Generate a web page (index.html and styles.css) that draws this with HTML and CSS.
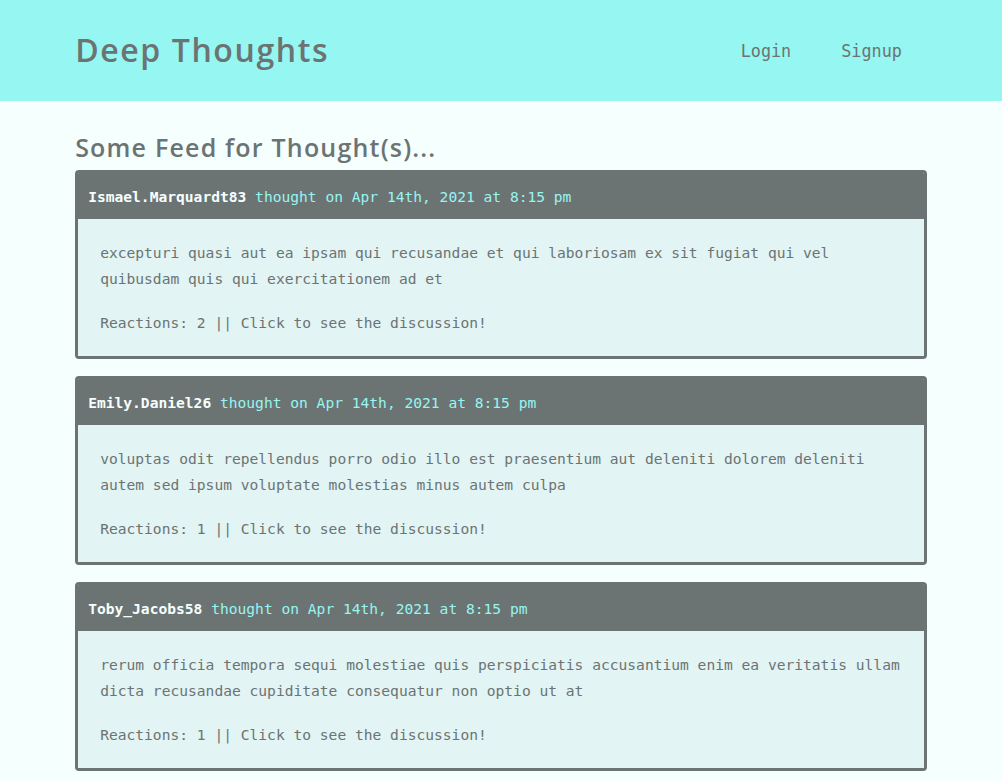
FILE: index.html
```html
<!DOCTYPE html>
<html lang="en">
<head>
<meta charset="utf-8">
<title>Deep Thoughts</title>
<link rel="stylesheet" href="styles.css">
</head>
<body>
<header class="site-header">
  <div class="container header-row">
    <a class="brand" href="#">Deep Thoughts</a>
    <nav class="nav">
      <a href="#">Login</a>
      <a href="#">Signup</a>
    </nav>
  </div>
</header>
<main class="container main">
  <h3 class="feed-title">Some Feed for Thought(s)...</h3>
  <div class="card">
    <div class="card-header"><a class="user" href="#">Ismael.Marquardt83</a>&nbsp;thought on Apr 14th, 2021 at 8:15 pm</div>
    <div class="card-body">
      <p>excepturi quasi aut ea ipsam qui recusandae et qui laboriosam ex sit fugiat qui vel quibusdam quis qui exercitationem ad et</p>
      <p>Reactions: 2 || Click to see the discussion!</p>
    </div>
  </div>
  <div class="card">
    <div class="card-header"><a class="user" href="#">Emily.Daniel26</a>&nbsp;thought on Apr 14th, 2021 at 8:15 pm</div>
    <div class="card-body">
      <p>voluptas odit repellendus porro odio illo est praesentium aut deleniti dolorem deleniti autem sed ipsum voluptate molestias minus autem culpa</p>
      <p>Reactions: 1 || Click to see the discussion!</p>
    </div>
  </div>
  <div class="card">
    <div class="card-header"><a class="user" href="#">Toby_Jacobs58</a>&nbsp;thought on Apr 14th, 2021 at 8:15 pm</div>
    <div class="card-body">
      <p>rerum officia tempora sequi molestiae quis perspiciatis accusantium enim ea veritatis ullam dicta recusandae cupiditate consequatur non optio ut at</p>
      <p>Reactions: 1 || Click to see the discussion!</p>
    </div>
  </div>
</main>
</body>
</html>
```
FILE: styles.css
```css
* { box-sizing: border-box; }
html, body { margin: 0; padding: 0; }
body {
  background: #f5fffe;
  color: #6c7373;
  font-family: "DejaVu Sans Mono", "Liberation Mono", monospace;
  font-size: 14.6px;
}
a { color: inherit; text-decoration: none; }
.container {
  width: 85%;
  margin: 0 auto;
}
.site-header {
  background: #96f6f1;
  height: 101px;
}
.header-row {
  height: 100%;
  display: flex;
  align-items: center;
  justify-content: space-between;
}
.brand {
  font-family: "Open Sans", "Lato", sans-serif;
  font-weight: 600;
  font-size: 32px;
  letter-spacing: 1.6px;
  color: #6c7373;
  margin-top: -2px;
}
.nav {
  display: flex;
  gap: 50px;
  padding-right: 25px;
  font-size: 16.8px;
}
.main {
  padding-top: 28px;
  padding-bottom: 40px;
}
.feed-title {
  font-family: "Open Sans", "Lato", sans-serif;
  font-weight: 600;
  font-size: 25px;
  letter-spacing: 1.2px;
  margin: 0 0 5px 0;
  line-height: 36px;
}
.card {
  border: 3px solid #6c7373;
  border-radius: 4px;
  margin-bottom: 17px;
  overflow: hidden;
}
.card-header {
  background: #6c7373;
  color: #96f6f1;
  height: 46px;
  display: flex;
  align-items: center;
  padding: 0 10px;
  white-space: nowrap;
}
.user {
  color: #f5fffe;
  font-weight: 700;
}
.card-body {
  background: #e2f4f3;
  padding: 21px 21px 20px 22px;
}
.card-body p {
  margin: 0;
  line-height: 26px;
}
.card-body p + p {
  margin-top: 18px;
}
```
